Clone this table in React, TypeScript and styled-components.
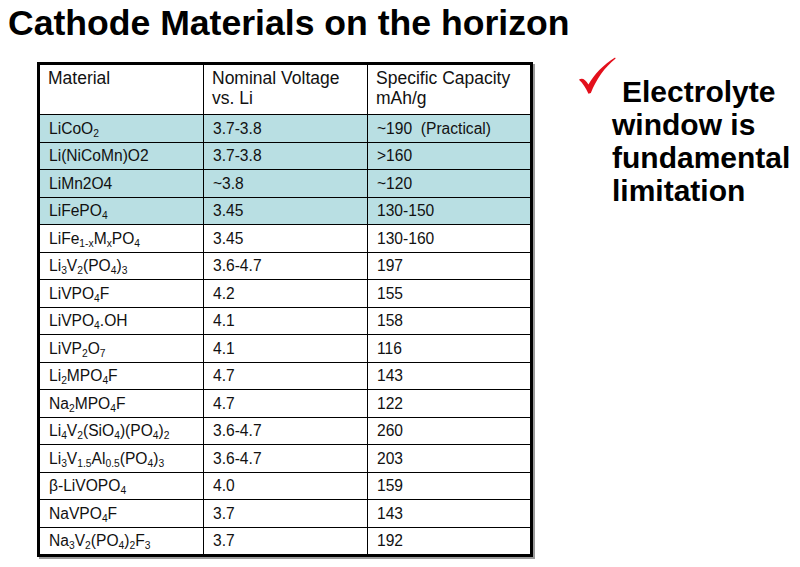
import React from "react";
import styled, { createGlobalStyle } from "styled-components";

const GlobalStyle = createGlobalStyle`
  html, body {
    margin: 0;
    padding: 0;
    background: #fff;
  }
  body {
    font-family: "Liberation Sans", Arial, sans-serif;
    color: #000;
  }
`;

const Slide = styled.div`
  width: 800px;
  height: 567px;
  overflow: hidden;
  background: #fff;
`;

const Title = styled.h1`
  margin: 0;
  padding: 3px 0 0 8px;
  font-size: 35.6px;
  line-height: 40px;
  font-weight: bold;
  white-space: nowrap;
`;

const Body = styled.div`
  display: flex;
  align-items: flex-start;
  padding: 19px 0 0 37px;
`;

const Table = styled.table`
  border-collapse: collapse;
  border: 3px solid #000;
  box-shadow: 2px 2px 0 #9a9a9a;
  color: #111;
  table-layout: fixed;
  width: 493px;
`;

const HeadCell = styled.th`
  text-align: left;
  font-weight: normal;
  font-size: 17.5px;
  vertical-align: top;
  padding: 3px 7px 6px 8px;
  line-height: 20px;
  border: 1.5px solid #000;
`;

const Cell = styled.td<{ $hl?: boolean }>`
  height: 26.5px;
  padding: 0 7px 0 9px;
  font-size: 15.6px;
  line-height: 19px;
  vertical-align: middle;
  white-space: pre;
  border: 1.5px solid #000;
  background: ${(p) => (p.$hl ? "#b9dfe3" : "#fff")};
`;

const Sub = styled.sub`
  font-size: 0.66em;
  line-height: 0;
  vertical-align: -0.3em;
`;

const Callout = styled.div`
  position: relative;
  margin: 13px 0 0 79px;
`;

const Check = styled.svg`
  position: absolute;
  left: -34px;
  top: -19px;
  width: 38px;
  height: 40px;
`;

const CalloutText = styled.p`
  margin: 0;
  font-size: 30px;
  line-height: 33px;
  font-weight: bold;
  white-space: nowrap;
`;

const FirstLine = styled.span`
  padding-left: 10px;
`;

type Row = {
  m: React.ReactNode;
  v: string;
  c: string;
  hl?: boolean;
};

const rows: Row[] = [
  { m: <>LiCoO<Sub>2</Sub></>, v: "3.7-3.8", c: "~190  (Practical)", hl: true },
  { m: "Li(NiCoMn)O2", v: "3.7-3.8", c: ">160", hl: true },
  { m: "LiMn2O4", v: "~3.8", c: "~120", hl: true },
  { m: <>LiFePO<Sub>4</Sub></>, v: "3.45", c: "130-150", hl: true },
  { m: <>LiFe<Sub>1-x</Sub>M<Sub>x</Sub>PO<Sub>4</Sub></>, v: "3.45", c: "130-160" },
  { m: <>Li<Sub>3</Sub>V<Sub>2</Sub>(PO<Sub>4</Sub>)<Sub>3</Sub></>, v: "3.6-4.7", c: "197" },
  { m: <>LiVPO<Sub>4</Sub>F</>, v: "4.2", c: "155" },
  { m: <>LiVPO<Sub>4</Sub>.OH</>, v: "4.1", c: "158" },
  { m: <>LiVP<Sub>2</Sub>O<Sub>7</Sub></>, v: "4.1", c: "116" },
  { m: <>Li<Sub>2</Sub>MPO<Sub>4</Sub>F</>, v: "4.7", c: "143" },
  { m: <>Na<Sub>2</Sub>MPO<Sub>4</Sub>F</>, v: "4.7", c: "122" },
  { m: <>Li<Sub>4</Sub>V<Sub>2</Sub>(SiO<Sub>4</Sub>)(PO<Sub>4</Sub>)<Sub>2</Sub></>, v: "3.6-4.7", c: "260" },
  { m: <>Li<Sub>3</Sub>V<Sub>1.5</Sub>Al<Sub>0.5</Sub>(PO<Sub>4</Sub>)<Sub>3</Sub></>, v: "3.6-4.7", c: "203" },
  { m: <>β-LiVOPO<Sub>4</Sub></>, v: "4.0", c: "159" },
  { m: <>NaVPO<Sub>4</Sub>F</>, v: "3.7", c: "143" },
  { m: <>Na<Sub>3</Sub>V<Sub>2</Sub>(PO<Sub>4</Sub>)<Sub>2</Sub>F<Sub>3</Sub></>, v: "3.7", c: "192" },
];

export default function App() {
  return (
    <Slide>
      <GlobalStyle />
      <Title>Cathode Materials on the horizon</Title>
      <Body>
        <Table>
          <colgroup>
            <col style={{ width: 165 }} />
            <col style={{ width: 164 }} />
            <col style={{ width: 164 }} />
          </colgroup>
          <thead>
            <tr>
              <HeadCell>Material</HeadCell>
              <HeadCell>
                Nominal Voltage
                <br />
                vs. Li
              </HeadCell>
              <HeadCell>
                Specific Capacity
                <br />
                mAh/g
              </HeadCell>
            </tr>
          </thead>
          <tbody>
            {rows.map((r, i) => (
              <tr key={i}>
                <Cell $hl={r.hl}>{r.m}</Cell>
                <Cell $hl={r.hl}>{r.v}</Cell>
                <Cell $hl={r.hl}>{r.c}</Cell>
              </tr>
            ))}
          </tbody>
        </Table>
        <Callout>
          <Check viewBox="0 0 40 40">
            <path
              d="M1 24 C4 21.5 7.5 23 11 29 C17 18 27 8 39 0.5 L39.6 1.6 C28 11 19.5 23 13.5 38 L11 38.6 C8.5 33 5 27.5 1 24 Z"
              fill="#e3101c"
            />
          </Check>
          <CalloutText>
            <FirstLine>Electrolyte</FirstLine>
            <br />
            window is
            <br />
            fundamental
            <br />
            limitation
          </CalloutText>
        </Callout>
      </Body>
    </Slide>
  );
}
